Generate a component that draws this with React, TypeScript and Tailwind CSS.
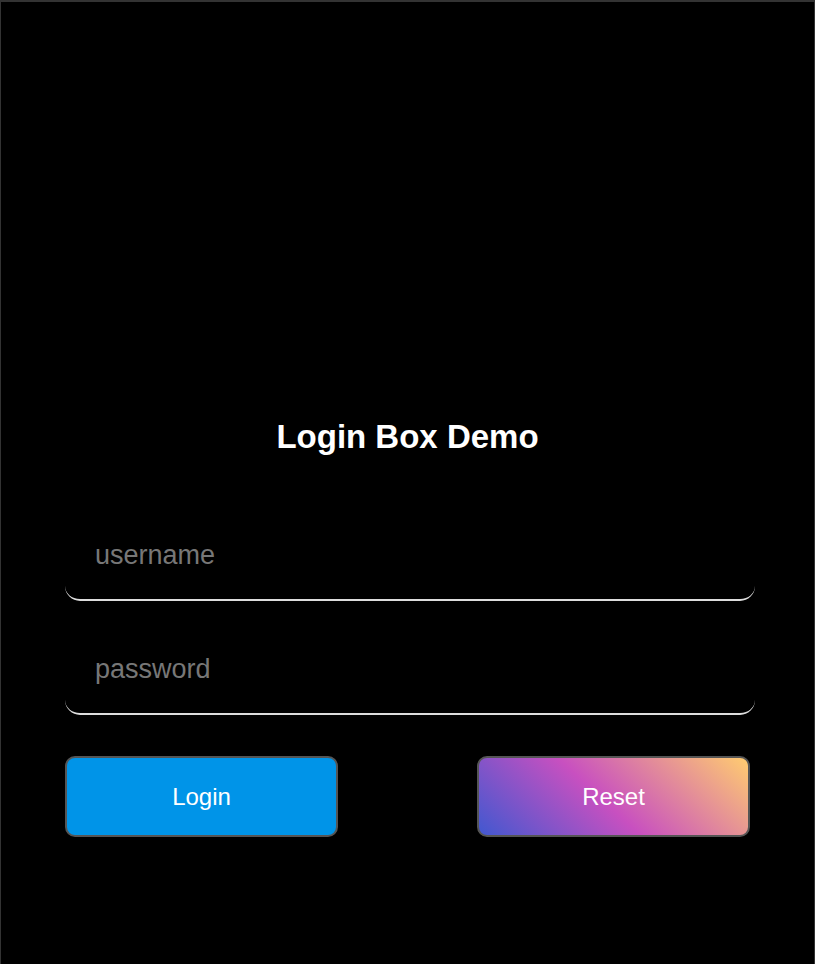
export default function App() {
  return (
    <div
      className="h-[964px] w-full bg-black border-t-2 border-l border-r border-[#333] overflow-hidden"
      style={{ fontFamily: '"Liberation Sans", Arial, sans-serif' }}
    >
      <div className="pt-[417px] px-[64px]">
        <h1 className="text-center text-white text-[33px] leading-[36px] font-bold">Login Box Demo</h1>

        <div className="mt-[61px] flex flex-col gap-[29px]">
          <input
            type="text"
            placeholder="username"
            className="h-[85px] w-[690px] bg-transparent border-b-2 border-[#ddd] rounded-[15px] px-[30px] pt-[4px] pb-[8px] text-[27px] text-white placeholder:text-[#777] outline-none"
          />
          <input
            type="password"
            placeholder="password"
            className="h-[85px] w-[690px] bg-transparent border-b-2 border-[#ddd] rounded-[15px] px-[30px] pt-[4px] pb-[8px] text-[27px] text-white placeholder:text-[#777] outline-none"
          />
        </div>

        <div className="mt-[41px] flex justify-between w-[685px]">
          <button className="h-[81px] w-[273px] rounded-[10px] border-2 border-[#555] bg-[#0094e8] text-white text-[24px]">
            Login
          </button>
          <button className="h-[81px] w-[273px] rounded-[10px] border-2 border-[#555] bg-[linear-gradient(43deg,#4158D0_0%,#C850C0_46%,#FFCC70_100%)] text-white text-[24px]">
            Reset
          </button>
        </div>
      </div>
    </div>
  );
}
